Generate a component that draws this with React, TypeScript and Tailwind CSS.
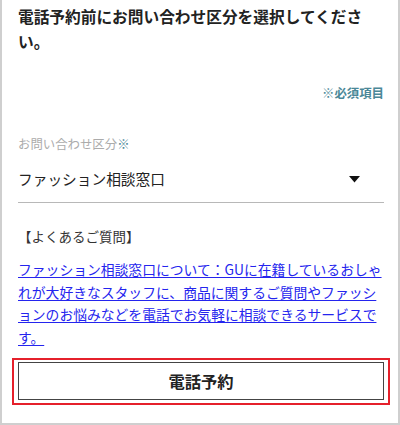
import React from "react";

const FONT = { fontFamily: '"Noto Sans CJK JP", "Noto Sans", sans-serif' };

const App = () => {
  return (
    <div
      className="box-border w-[400px] h-[425px] bg-white border-x-2 border-b-2 border-[#cfcfcf] pl-4 pr-[14px] pt-1 overflow-hidden"
      style={FONT}
    >
      <h1 className="text-[15.7px] leading-[25px] font-bold text-[#222]">
        電話予約前にお問い合わせ区分を選択してください。
      </h1>

      <p className="mt-[30px] text-right text-[12.4px] leading-[18px] font-bold text-[#4a8797]">
        ※必須項目
      </p>

      <div className="mt-[33px]">
        <label className="block text-[12.4px] leading-[18px] text-[#ababab]">
          お問い合わせ区分<span className="text-[#4a8797]">※</span>
        </label>
        <div className="mt-[15px] flex items-center justify-between border-b border-[#b8b8b8] pb-3">
          <span className="text-[14.7px] leading-[22px] text-[#222]">
            ファッション相談窓口
          </span>
          <svg width="11" height="7" viewBox="0 0 11 7" className="mr-[24px]">
            <polygon points="0,0 11,0 5.5,6.5" fill="#111" />
          </svg>
        </div>
      </div>

      <p className="mt-[23px] text-[13.5px] leading-[20px] text-[#333]">
        【よくあるご質問】
      </p>

      {/* line breaks pinned to match the reference wrap */}
      <a
        href="#"
        className="mt-3 block text-[13.8px] leading-[22.7px] text-[#2424ee] underline underline-offset-2"
      >
        ファッション相談窓口について：GUに在籍しているおしゃ
        <br />
        れが大好きなスタッフに、商品に関するご質問やファッシ
        <br />
        ョンのお悩みなどを電話でお気軽に相談できるサービスで
        <br />
        す。
      </a>

      <div className="mt-[9px] -mx-[6px] border-2 border-[#e5202b] px-1 pt-0.5 pb-[3px]">
        <button
          type="button"
          className="w-full h-[38px] border-[1.5px] border-[#444] bg-white text-[16.3px] font-bold text-[#222] flex items-center justify-center"
          style={FONT}
        >
          電話予約
        </button>
      </div>
    </div>
  );
};

export default App;
